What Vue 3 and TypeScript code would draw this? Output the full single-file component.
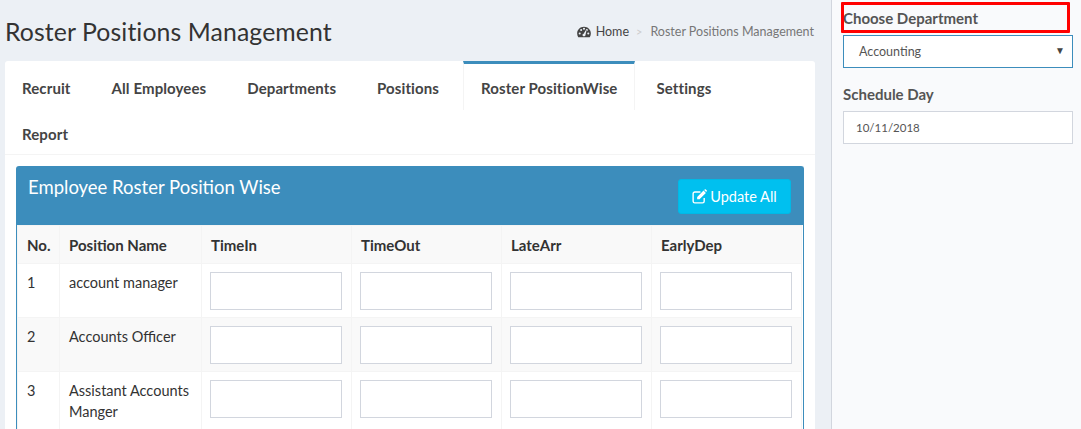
<script setup lang="ts">
const tabs = [
  { label: 'Recruit', active: false },
  { label: 'All Employees', active: false },
  { label: 'Departments', active: false },
  { label: 'Positions', active: false },
  { label: 'Roster PositionWise', active: true },
  { label: 'Settings', active: false },
  { label: 'Report', active: false },
]
const columns = ['TimeIn', 'TimeOut', 'LateArr', 'EarlyDep']
const rows = [
  { no: 1, name: 'account manager' },
  { no: 2, name: 'Accounts Officer' },
  { no: 3, name: 'Assistant Accounts Manger' },
]
</script>

<template>
  <div class="page">
    <main class="main">
      <header class="head">
        <h1>Roster Positions Management</h1>
        <nav class="crumbs">
          <svg class="gauge" viewBox="0 0 16 14" width="14" height="12">
            <path fill="#444" fill-rule="evenodd" d="M8 1C3.6 1 0 4.400 0 8.800c0 1.700.5 3.100 1.300 4.200h13.400c.8-1.100 1.300-2.500 1.300-4.200C16 4.400 12.400 1 8 1zM3 9.900a1.200 1.200 0 1 1 0-2.400 1.200 1.200 0 0 1 0 2.400zM4.700 5.800a1.200 1.200 0 1 1 0-2.400 1.200 1.200 0 0 1 0 2.400zM8 4.400A1.200 1.200 0 1 1 8 2a1.200 1.200 0 0 1 0 2.400zM9.300 11.300a1.700 1.700 0 0 1-3-1.500c.3-.5.8-.8 1.300-.9l2.600-4.300c.2-.3.9 0 .8.400l-1.200 4.800c.2.500 0 1.100-.5 1.500zM11.300 5.800a1.200 1.200 0 1 1 0-2.400 1.200 1.200 0 0 1 0 2.400zM13 9.900a1.200 1.200 0 1 1 0-2.400 1.200 1.200 0 0 1 0 2.400z"/>
          </svg>
          <span class="home">Home</span>
          <span class="sep">&gt;</span>
          <span class="current">Roster Positions Management</span>
        </nav>
      </header>

      <section class="card">
        <ul class="tabs">
          <li v-for="t in tabs" :key="t.label" class="tab" :class="{ active: t.active }">{{ t.label }}</li>
        </ul>
        <div class="pane">
          <div class="box">
            <div class="box-head">
              <h3>Employee Roster Position Wise</h3>
              <button class="update" type="button">
                <svg viewBox="0 0 16 16" width="15" height="15">
                  <path fill="none" stroke="#fff" stroke-width="1.500" d="M13 9.500V13a1.800 1.800 0 0 1-1.800 1.800H3A1.800 1.800 0 0 1 1.200 13V5A1.800 1.800 0 0 1 3 3.200h6"/>
                  <path fill="#fff" d="M5.500 8.500l6.800-6.800 2.500 2.500-6.800 6.800H5.500zM13 1l.6-.6c.3-.3.800-.3 1.100 0l1 1c.3.300.3.800 0 1.100l-.6.600z"/>
                </svg>
                Update All
              </button>
            </div>
            <table class="grid">
              <colgroup>
                <col class="c-no" /><col class="c-name" /><col class="c-val" /><col class="c-val" /><col class="c-val" /><col class="c-val" />
              </colgroup>
              <thead>
                <tr>
                  <th>No.</th>
                  <th>Position Name</th>
                  <th v-for="c in columns" :key="c">{{ c }}</th>
                </tr>
              </thead>
              <tbody>
                <tr v-for="r in rows" :key="r.no">
                  <td>{{ r.no }}</td>
                  <td>{{ r.name }}</td>
                  <td v-for="c in columns" :key="c" class="field"><input class="cell-input" type="text" /></td>
                </tr>
              </tbody>
            </table>
          </div>
        </div>
      </section>
    </main>

    <aside class="side">
      <div class="highlight-wrap">
        <label class="side-label">Choose Department</label>
        <span class="marker"></span>
      </div>
      <div class="select">
        <span>Accounting</span>
        <span class="caret">▼</span>
      </div>
      <label class="side-label second">Schedule Day</label>
      <input class="date" type="text" value="10/11/2018" />
    </aside>
  </div>
</template>

<style>
html, body { margin: 0; background: #ecf0f5; overflow: hidden; }
</style>

<style scoped>
* { box-sizing: border-box; }
.page {
  display: flex;
  width: 1081px;
  height: 429px;
  overflow: hidden;
  font-family: "Lato", "Open Sans", sans-serif;
  font-size: 14px;
  color: #333;
  background: #ecf0f5;
}
.main { width: 831px; flex: none; padding: 0 16px 0 5px; }
.head { display: flex; justify-content: space-between; align-items: center; height: 61px; padding-top: 2px; }
h1 { margin: 0; font-size: 24.800px; font-weight: 400; color: #333; letter-spacing: .1px; }
.crumbs { display: flex; align-items: center; font-size: 12.500px; margin-right: 1px; }
.gauge { margin-right: 5px; }
.home { color: #444; }
.sep { color: #ccc; margin: 0 8px 0 7px; font-size: 11px; }
.current { color: #777; }

.card { background: #fff; border-radius: 3px 3px 0 0; height: 368px; overflow: hidden; }
.tabs {
  list-style: none;
  margin: 0 0 0 -1px;
  padding: 0 20px 1px 0;
  display: flex;
  flex-wrap: wrap;
  border-bottom: 1px solid #f4f4f4;
}
.tab {
  height: 49px;
  padding: 14px 17px 0;
  margin: 0 5px -3px 0;
  font-size: 15px;
  font-weight: 700;
  letter-spacing: .1px;
  line-height: 20px;
  color: #444;
  border: 1px solid transparent;
  border-width: 0 1px;
  border-top: 3px solid transparent;
}
.tab.active {
  margin-left: 1px;
  margin-right: 3px;
  border-top-color: #3c8dbc;
  border-left-color: #f4f4f4;
  border-right-color: #f4f4f4;
}
.pane { padding: 11px; }
.box { width: 788px; border: 1px solid #3c8dbc; border-bottom: 0; border-radius: 3px 3px 0 0; }
.box-head {
  display: flex;
  justify-content: space-between;
  height: 58px;
  background: #3c8dbc;
  padding: 9px 12px 0 11px;
  color: #fff;
}
h3 { margin: 0; font-size: 18.500px; font-weight: 400; line-height: 22px; }
.update {
  display: flex;
  flex: none;
  align-items: center;
  justify-content: center;
  gap: 3px;
  width: 113px;
  height: 35px;
  margin-top: 3px;
  background: #00c0ef;
  border: 1px solid #00b9e6;
  border-radius: 3px;
  color: #fff;
  font: inherit;
  font-size: 14.500px;
}
.grid { width: 784px; table-layout: fixed; border-collapse: collapse; }
.c-no { width: 42px; }
.c-name { width: 142px; }
.c-val { width: 150px; }
th, td { border: 1px solid #f4f4f4; vertical-align: top; text-align: left; }
th { height: 38px; padding: 9px 9px 7px; line-height: 20px; font-size: 15px; font-weight: 700; color: #333; background: #f9f9f9; }
td { height: 54px; padding: 8px 9px 7px; line-height: 21px; font-size: 14.500px; }
.field { padding-left: 8px; }
tbody tr:nth-child(2) td { background: #f9f9f9; }
.cell-input {
  display: block;
  width: 132px;
  height: 38px;
  background: #fff;
  border: 1px solid #d2d6de;
  outline: 0;
}

.side { flex: 1; background: #f9fafc; border-left: 1px solid #d2d6de; padding: 0 8px 0 11px; }
.highlight-wrap { position: relative; height: 35px; padding-top: 8px; }
.side-label { display: block; font-size: 15px; font-weight: 700; color: #555; line-height: 20px; }
.marker {
  position: absolute;
  left: -2px;
  top: 2px;
  width: 229px;
  height: 31px;
  border: 3px solid #f00;
  border-radius: 1px;
}
.select {
  display: flex;
  justify-content: space-between;
  align-items: center;
  height: 33px;
  border: 1px solid #3c8dbc;
  background: #fff;
  padding: 0 7px 0 15px;
  font-size: 12.500px;
  color: #555;
}
.caret { font-size: 10px; color: #444; margin-top: -4px; }
.second { margin-top: 16px; margin-bottom: 7px; }
.date {
  display: block;
  width: 100%;
  height: 33px;
  border: 1px solid #d2d6de;
  background: #fff;
  padding: 0 12px;
  font: inherit;
  font-size: 11.500px;
  color: #555;
  outline: 0;
}
</style>
